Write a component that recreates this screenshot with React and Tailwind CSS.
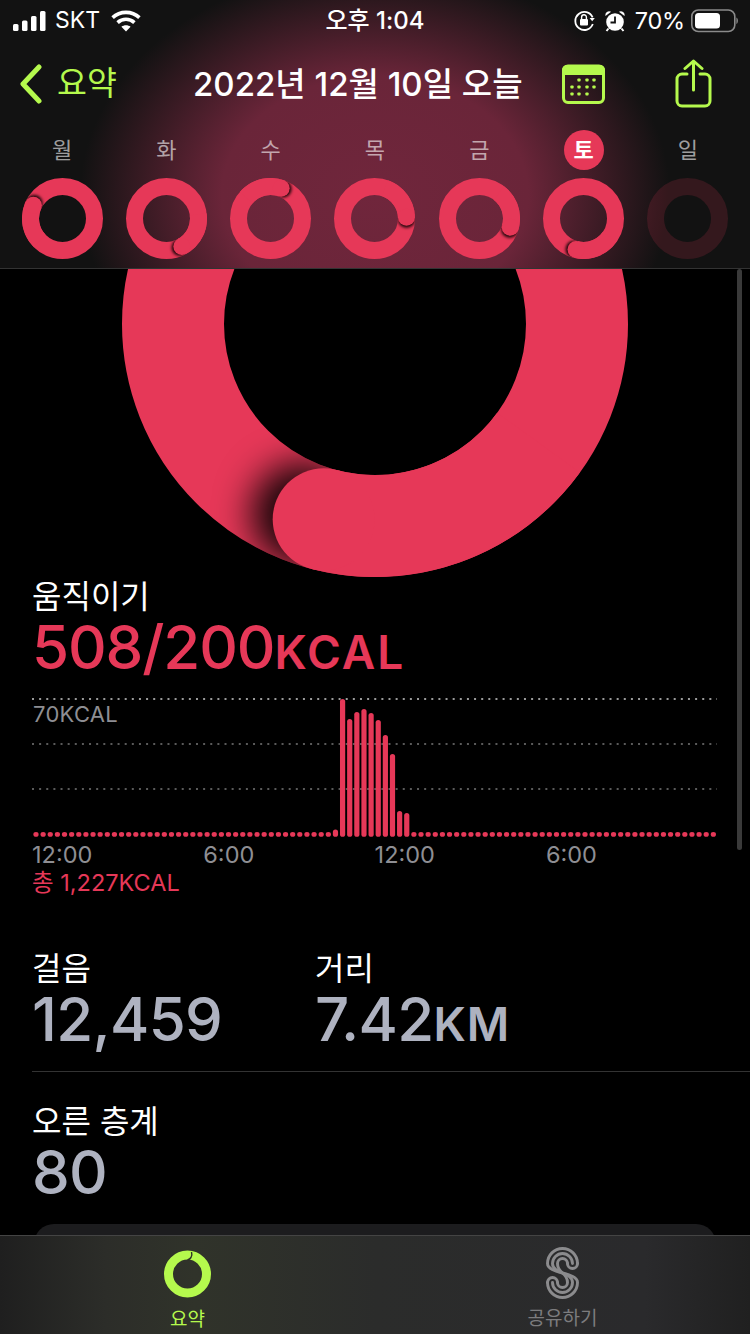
import React from "react";

const RED = "#e63858";
const GREEN = "#b5f94d";
const KR = { fontFamily: '"Inter","Noto Sans CJK KR",sans-serif' };

function Ring({ cx, cy, r, sw, dx, dy, id, viewBox, width, height, blur, offset, className }) {
  const len = Math.hypot(dx, dy);
  const ux = dx / len, uy = dy / len;
  const capX = cx + ux * r, capY = cy + uy * r;
  const tx = -uy, ty = ux;
  const a = Math.atan2(uy, ux) - 1.2;
  const sx = cx + Math.cos(a) * r, sy = cy + Math.sin(a) * r;
  return (
    <svg width={width} height={height} viewBox={viewBox} className={className}>
      <defs>
        <filter id={id + "b"} x="-150%" y="-150%" width="400%" height="400%">
          <feGaussianBlur stdDeviation={blur} />
        </filter>
        <mask id={id + "m"} maskUnits="userSpaceOnUse" x={cx - r - sw} y={cy - r - sw} width={2 * (r + sw)} height={2 * (r + sw)}>
          <circle cx={cx} cy={cy} r={r} fill="none" stroke="#fff" strokeWidth={sw} />
        </mask>
      </defs>
      <circle cx={cx} cy={cy} r={r} fill="none" stroke={RED} strokeWidth={sw} />
      <g mask={`url(#${id}m)`}>
        <circle cx={capX + tx * offset} cy={capY + ty * offset} r={sw / 2} fill="#000" fillOpacity="0.9" filter={`url(#${id}b)`} />
      </g>
      <path d={`M${sx} ${sy}A${r} ${r} 0 0 1 ${capX} ${capY}`} fill="none" stroke={RED} strokeWidth={sw} />
      <circle cx={capX} cy={capY} r={sw / 2} fill={RED} />
    </svg>
  );
}

const DAYS = [
  ["월", -28.5, -13],
  ["화", 15.7, 28.7],
  ["수", 10.5, -29.7],
  ["목", 31.7, -1.3],
  ["금", 30.3, 8.7],
  ["토", -7.3, 30.3],
  ["일", 0, 0],
];

const TOPS = { 42: 829.5, 43: 699, 44: 719, 45: 712, 46: 709, 47: 713, 48: 720, 49: 735, 50: 754, 51: 811, 52: 813 };

function Chart() {
  const items = [];
  for (let i = 0; i < 96; i++) {
    const x = 36 + i * 7.13;
    const top = TOPS[i] ?? 832;
    items.push(<rect key={i} x={x - 2.6} y={top} width="5.2" height={836.8 - top} rx="2.6" fill={RED} />);
  }
  return (
    <svg width="750" height="145" viewBox="0 695 750 145" className="block">
      <line x1="32" x2="717" y1="699" y2="699" stroke="#9a9a9a" strokeWidth="2" strokeDasharray="2 5.13" />
      <line x1="32" x2="717" y1="744" y2="744" stroke="#5a5a5a" strokeWidth="2" strokeDasharray="2 5.13" />
      <line x1="32" x2="717" y1="789" y2="789" stroke="#5a5a5a" strokeWidth="2" strokeDasharray="2 5.13" />
      {items}
    </svg>
  );
}

function Metric({ label, value, unit, labelClass = "" }) {
  return (
    <div className={labelClass}>
      <div className="text-[32px] leading-[38px] text-white">{label}</div>
      <div className="text-[60px] leading-[62px] text-[#aeb2c0] font-medium tracking-[-0.7px] whitespace-nowrap">
        {value}
        {unit && <span className="text-[46px] font-semibold tracking-[0.8px]">{unit}</span>}
      </div>
    </div>
  );
}

function sPath(r) {
  const c = 16.5, t = 16.5, b = 35.5;
  return `M${c + r} ${t}A${r} ${r} 0 0 0 ${c - r} ${t}C${c - r} 27 ${c + r} 25 ${c + r} ${b}A${r} ${r} 0 0 1 ${c - r} ${b}`;
}

export default function App() {
  return (
    <div className="relative w-[750px] h-[1334px] overflow-hidden bg-black flex flex-col" style={KR}>
      <header className="h-[269px] shrink-0 border-b border-[#333] bg-[#121212] bg-[radial-gradient(ellipse_295px_228px_at_375px_195px,#70263c_0%,#6a2539_52%,#121212_100%)]">
        <div className="h-[41px] grid grid-cols-[1fr_auto_1fr] items-center text-white">
          <div className="flex items-center pl-[13px]">
            <svg width="33" height="20" viewBox="0 0 33 20" fill="#fff">
              <rect x="0" y="13" width="5.5" height="7" rx="1.5" />
              <rect x="9" y="9.5" width="5.5" height="10.5" rx="1.5" />
              <rect x="18" y="5" width="5.5" height="15" rx="1.5" />
              <rect x="27" y="0" width="5.5" height="20" rx="1.5" />
            </svg>
            <span className="ml-[9px] text-[23px] leading-none font-normal">SKT</span>
            <svg className="ml-[11px]" width="30" height="22" viewBox="0 0 30 22" fill="none" stroke="#fff" strokeWidth="3.6">
              <path d="M1.6 7.6C9 .6 21 .6 28.4 7.6" />
              <path d="M6.6 12.6c4.8-4.4 12-4.4 16.8 0" />
              <path d="M15 21.5l-4.6-4.8c2.6-2 6.6-2 9.2 0z" fill="#fff" stroke="none" />
            </svg>
          </div>
          <div className="text-[24px] leading-none font-medium">오후 1:04</div>
          <div className="flex items-center justify-end pr-[12px]">
            <svg width="21" height="21" viewBox="0 0 21 21" fill="none">
              <path d="M18.6 7.4A9 9 0 1 0 18.8 14" stroke="#fff" strokeWidth="1.8" />
              <path d="M15.6 8l5.2 0-2.6 3.2z" fill="#fff" />
              <rect x="6" y="9" width="8" height="6.5" rx="1" fill="#fff" />
              <path d="M7.6 9V7.2a2.4 2.4 0 0 1 4.8 0V9" stroke="#fff" strokeWidth="1.4" />
            </svg>
            <svg className="ml-[10px]" width="20" height="22" viewBox="0 0 20 22" fill="none">
              <circle cx="10" cy="12" r="8.8" fill="#fff" />
              <path d="M.5 6a3.800 3.800 0 0 1 5.600-4.200zM19.500 6a3.800 3.800 0 0 0-5.600-4.200z" fill="#fff" />
              <path d="M3.500 18.500l-2 2.500M16.500 18.500l2 2.500" stroke="#fff" strokeWidth="2" />
              <path d="M10 6.500V12.500H5.500" stroke="#121212" strokeWidth="1.800" />
            </svg>
            <span className="ml-[10px] text-[23.5px] leading-none font-normal tracking-[-0.2px]">70%</span>
            <svg className="ml-[6px]" width="47" height="24" viewBox="0 0 47 24" fill="none">
              <rect x="0.8" y="1" width="43" height="21.5" rx="6.5" stroke="#8a8a8a" strokeWidth="1.600" />
              <rect x="4" y="4" width="25" height="15.500" rx="3.500" fill="#fff" />
              <path d="M45.400 8.500c1 .5 1.500 1.700 1.500 3.200s-.5 2.700-1.500 3.200z" fill="#8a8a8a" />
            </svg>
          </div>
        </div>

        <div className="h-[89px] flex items-center pb-[3px]">
          <svg className="ml-[19px] shrink-0" width="24" height="40" viewBox="0 0 24 40" fill="none" stroke={GREEN} strokeWidth="5" strokeLinecap="round" strokeLinejoin="round">
            <path d="M20 3L4 20l16 17" />
          </svg>
          <span className="ml-[14px] w-[60px] text-[32.5px] leading-none whitespace-nowrap" style={{ color: GREEN }}>요약</span>
          <span className="ml-[76px] w-[328px] text-[33px] leading-none font-medium text-white whitespace-nowrap">2022년 12월 10일 오늘</span>
          <svg className="ml-[40px] shrink-0" width="44" height="40" viewBox="0 0 44 40" fill="none">
            <rect x="2.500" y="2" width="40" height="36.500" rx="4.500" stroke={GREEN} strokeWidth="3" />
            <path d="M1 6a5 5 0 0 1 5-5h33a5 5 0 0 1 5 5v5H1z" fill={GREEN} />
            {[[18,16],[26,16],[33,16],[11,23],[18,23],[26,23],[33,23],[11,30],[18,30],[26,30]].map(([x, y]) => (
              <rect key={x + "-" + y} x={x - 1.600} y={y - 1.500} width="3.200" height="3" rx=".8" fill={GREEN} />
            ))}
          </svg>
          <svg className="ml-[70px] shrink-0 -mt-px" width="39" height="49" viewBox="0 0 39 49" fill="none" stroke={GREEN} strokeWidth="3" strokeLinecap="round" strokeLinejoin="round">
            <path d="M12 15H7a5 5 0 0 0-5 5v22a5 5 0 0 0 5 5h23a5 5 0 0 0 5-5V20a5 5 0 0 0-5-5h-5" />
            <path d="M18.500 31V2M10 9.500L18.500 2 27 9.500" />
          </svg>
        </div>

        <div className="grid grid-cols-7 px-[10px]">
          {DAYS.map(([d, dx, dy], i) => (
            <div key={d} className="flex flex-col items-center">
              <div className={`w-[40px] h-[40px] rounded-full flex items-center justify-center text-[22px] leading-none ${d === "토" ? "bg-[#e63858] text-white font-bold" : "text-[#ffffff99]"}`}>
                {d}
              </div>
              {d === "일" ? (
                <svg width="81" height="81" viewBox="0 0 81 81" className="mt-[8px]">
                  <circle cx="40.500" cy="40.500" r="32" fill="none" stroke={RED} strokeOpacity="0.16" strokeWidth="17" />
                </svg>
              ) : (
                <Ring className="mt-[8px]" id={`d${i}`} cx={40.5} cy={40.5} r={32} sw={17} dx={dx} dy={dy} viewBox="0 0 81 81" width={81} height={81} blur={1.6} offset={2} />
              )}
            </div>
          ))}
        </div>
      </header>

      <main className="relative flex-1 min-h-0 overflow-hidden">
        <div className="flex justify-center">
          <Ring id="big" cx={375} cy={324} r={202} sw={102} dx={-52} dy={198} viewBox="122 269 506 308" width={506} height={308} blur={18} offset={22} className="block" />
        </div>

        <div className="pl-[32px] mt-[1px] text-[32px] leading-[38px] text-white">움직이기</div>
        <div className="pl-[32px] text-[60px] leading-[62px] font-medium tracking-[-1.1px] text-[#e63858] whitespace-nowrap">
          508/200<span className="text-[46px] font-semibold tracking-[2px]">KCAL</span>
        </div>

        <div className="relative mt-[12px]">
          <Chart />
          <div className="absolute left-[33px] top-[7px] text-[22px] leading-[24px] tracking-[0.3px] text-[#8e8e93]">70KCAL</div>
        </div>
        <div className="ml-[32px] grid grid-cols-[repeat(4,171.300px)] text-[23.5px] leading-[26px] text-[#8e8e93] mt-[2px]">
          <span>12:00</span>
          <span>6:00</span>
          <span>12:00</span>
          <span>6:00</span>
        </div>
        <div className="pl-[32px] text-[23.5px] leading-[28px] text-[#e63858] mt-[1px]">총 1,227KCAL</div>

        <div className="ml-[32px] mt-[53px] flex">
          <Metric label="걸음" value="12,459" labelClass="w-[283px]" />
          <Metric label="거리" value="7.42" unit="KM" />
        </div>
        <div className="ml-[32px] mt-[16px] h-px bg-[#333]" />
        <div className="ml-[32px] mt-[31px]">
          <Metric label="오른 층계" value="80" />
        </div>
        <div className="mx-[34px] mt-[21px] h-[80px] rounded-t-[20px] bg-[#1c1c1e]" />

        <div className="absolute right-[8px] top-0 w-[5px] h-[581px] rounded-full bg-[#3a3a3a]" />
      </main>

      <footer className="h-[99px] shrink-0 border-t border-[#444] bg-[linear-gradient(90deg,#1f1f1f_0%,#2c2d29_14%,#30332a_26%,#2b2c2b_50%,#2a2a2c_86%,#202020_100%)] grid grid-cols-2">
        <div className="flex flex-col items-center pt-[14px]">
          <svg width="47" height="48" viewBox="0 0 47 48" fill="none">
            <circle cx="23.500" cy="24" r="19" stroke={GREEN} strokeWidth="9" />
            <path d="M27.500 2c.6 2 .4 4-.5 5.500-.8 1.200-2 2-3.500 2.500" stroke="#2e3029" strokeWidth="1.400" />
          </svg>
          <span className="mt-[11px] text-[19px] leading-[22px]" style={{ color: GREEN }}>요약</span>
        </div>
        <div className="flex flex-col items-center pt-[11px]">
          <svg width="33" height="52" viewBox="0 0 33 52" fill="none" stroke="#8b8b8d" strokeWidth="2.900" strokeLinecap="round">
            <path d={sPath(15)} />
            <path d={sPath(10)} />
            <path d={sPath(5)} />
            <path d="M31.500 16.500A5 5 0 0 1 21.500 16.500M1.500 35.500A5 5 0 0 1 11.500 35.500" />
          </svg>
          <span className="mt-[9px] text-[19px] leading-[22px] text-[#7c7c7e]">공유하기</span>
        </div>
      </footer>
    </div>
  );
}
